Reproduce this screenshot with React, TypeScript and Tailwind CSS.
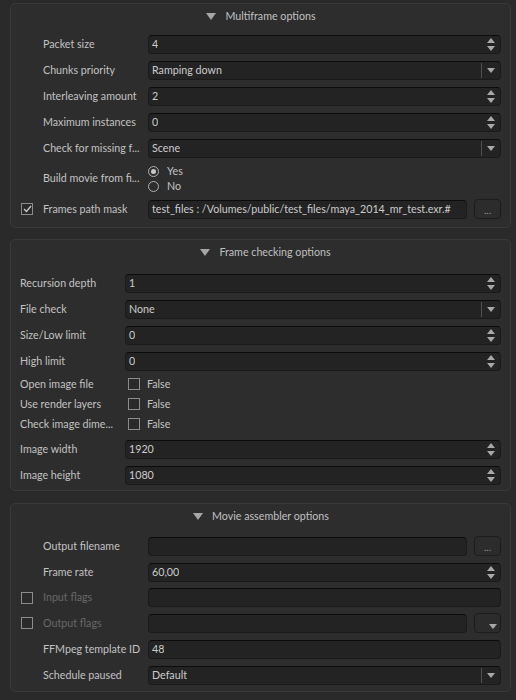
import React from "react";

const font = { fontFamily: "Lato, 'Open Sans', sans-serif" };

function Spin() {
  return (
    <div className="flex flex-col items-center gap-[3px] pr-[5px]">
      <svg width="8" height="5" viewBox="0 0 8 5">
        <path d="M0 5 L4 0 L8 5 Z" fill="#a8a8a8" />
      </svg>
      <svg width="8" height="5" viewBox="0 0 8 5">
        <path d="M0 0 L8 0 L4 5 Z" fill="#a8a8a8" />
      </svg>
    </div>
  );
}

function ComboArrow() {
  return (
    <div className="flex items-center h-full">
      <div className="w-px h-[15px] bg-[#505050]" />
      <div className="px-[5px]">
        <svg width="8" height="5" viewBox="0 0 8 5">
          <path d="M0 0 L8 0 L4 5 Z" fill="#a8a8a8" />
        </svg>
      </div>
    </div>
  );
}

type FieldKind = "spin" | "combo" | "text";

function Field({ value = "", kind = "text", className = "" }: { value?: string; kind?: FieldKind; className?: string }) {
  return (
    <div
      className={`h-[19px] flex items-center justify-between rounded-[4px] bg-[#232323] border border-[#1a1a1a] border-t-[#0c0c0c] text-[10.7px] text-[#cccccc] ${className}`}
    >
      <span className="pl-[3px] truncate">{value}</span>
      {kind === "spin" && <Spin />}
      {kind === "combo" && <ComboArrow />}
    </div>
  );
}

function DotsButton({ arrow = false }: { arrow?: boolean }) {
  return (
    <div className="w-[27px] h-[20px] shrink-0 rounded-[4px] bg-[#2c2c2c] border border-[#1c1c1c] flex items-end justify-center pb-[3px]">
      {arrow ? (
        <svg width="8" height="5" viewBox="0 0 8 5" className="ml-[10px]">
          <path d="M0 0 L8 0 L4 5 Z" fill="#a8a8a8" />
        </svg>
      ) : (
        <span className="text-[10px] leading-none text-[#9a9a9a]">...</span>
      )}
    </div>
  );
}

function Check({ checked = false }: { checked?: boolean }) {
  return (
    <div className="w-[12px] h-[12px] border-[1.5px] border-[#8c8c8c] bg-[#2a2a2a] flex items-center justify-center">
      {checked && (
        <svg width="9" height="8" viewBox="0 0 9 8">
          <path d="M1 4 L3.5 6.5 L8 1" stroke="#c8c8c8" strokeWidth="1.4" fill="none" />
        </svg>
      )}
    </div>
  );
}

function Radio({ on = false }: { on?: boolean }) {
  return (
    <div className="w-[11px] h-[11px] rounded-full border-[1.5px] border-[#b0b0b0] flex items-center justify-center">
      {on && <div className="w-[5px] h-[5px] rounded-full bg-[#c8c8c8]" />}
    </div>
  );
}

function Header({ title, h }: { title: string; h: string }) {
  return (
    <div className={`flex items-center justify-center gap-[9px] pl-[10px] ${h}`}>
      <svg width="10" height="7" viewBox="0 0 10 7">
        <path d="M0 0 L10 0 L5 7 Z" fill="#a6a6a6" />
      </svg>
      <span className="text-[10.7px] text-[#c0c0c0]">{title}</span>
    </div>
  );
}

function Row({
  label,
  labelW,
  lead,
  disabled,
  children,
  h = "h-[26px]",
}: {
  label: string;
  labelW: string;
  lead?: React.ReactNode;
  disabled?: boolean;
  children: React.ReactNode;
  h?: string;
}) {
  return (
    <div className={`flex items-center ${h}`}>
      {lead !== undefined && <div className="w-[32px] flex justify-center shrink-0">{lead}</div>}
      <div
        className={`${labelW} shrink-0 text-[10.7px] whitespace-nowrap ${disabled ? "text-[#686868]" : "text-[#c2c2c2]"}`}
      >
        {label}
      </div>
      <div className="flex-1 flex items-center gap-[7px]">{children}</div>
    </div>
  );
}

function Panel({ className = "", children }: { className?: string; children: React.ReactNode }) {
  return (
    <div className={`ml-[10px] mr-[5px] rounded-[5px] border border-[#393939] bg-[#2d2d2d] ${className}`}>
      {children}
    </div>
  );
}

export default function App() {
  return (
    <div className="w-[516px] h-[700px] bg-[#2a2a2a] pt-[3px] overflow-hidden" style={font}>
      {/* Multiframe */}
      <Panel className="pr-[9px] pb-[5px]">
        <Header title="Multiframe options" h="h-[24px]" />
        <div className="pt-[3px]">
          <Row label="Packet size" labelW="w-[105px]" lead={<span />}>
            <Field value="4" kind="spin" className="flex-1" />
          </Row>
          <Row label="Chunks priority" labelW="w-[105px]" lead={<span />}>
            <Field value="Ramping down" kind="combo" className="flex-1" />
          </Row>
          <Row label="Interleaving amount" labelW="w-[105px]" lead={<span />}>
            <Field value="2" kind="spin" className="flex-1" />
          </Row>
          <Row label="Maximum instances" labelW="w-[105px]" lead={<span />}>
            <Field value="0" kind="spin" className="flex-1" />
          </Row>
          <Row label="Check for missing f..." labelW="w-[105px]" lead={<span />}>
            <Field value="Scene" kind="combo" className="flex-1" />
          </Row>
          <Row label="Build movie from fi..." labelW="w-[105px]" lead={<span />} h="h-[35px]">
            <div className="flex flex-col gap-[3px] text-[10.7px] text-[#c2c2c2]">
              <div className="flex items-center gap-[8px] h-[12px]">
                <Radio on />
                <span>Yes</span>
              </div>
              <div className="flex items-center gap-[8px] h-[12px]">
                <Radio />
                <span>No</span>
              </div>
            </div>
          </Row>
          <Row label="Frames path mask" labelW="w-[105px]" lead={<Check checked />}>
            <Field value="test_files : /Volumes/public/test_files/maya_2014_mr_test.exr.#" className="flex-1" />
            <DotsButton />
          </Row>
        </div>
      </Panel>

      {/* Frame checking */}
      <Panel className="mt-[11px] pr-[9px] pl-[9px] pb-[2px]">
        <Header title="Frame checking options" h="h-[24px]" />
        <div className="pt-[6px]">
          <Row label="Recursion depth" labelW="w-[105px]">
            <Field value="1" kind="spin" className="flex-1" />
          </Row>
          <Row label="File check" labelW="w-[105px]">
            <Field value="None" kind="combo" className="flex-1" />
          </Row>
          <Row label="Size/Low limit" labelW="w-[105px]">
            <Field value="0" kind="spin" className="flex-1" />
          </Row>
          <Row label="High limit" labelW="w-[105px]">
            <Field value="0" kind="spin" className="flex-1" />
          </Row>
          {["Open image file", "Use render layers", "Check image dime..."].map((l) => (
            <Row key={l} label={l} labelW="w-[108px]" h="h-[20px]">
              <div className="flex items-center gap-[7px] text-[10.7px] text-[#c2c2c2]">
                <Check />
                <span>False</span>
              </div>
            </Row>
          ))}
          <div className="h-[2px]" />
          <Row label="Image width" labelW="w-[105px]">
            <Field value="1920" kind="spin" className="flex-1" />
          </Row>
          <Row label="Image height" labelW="w-[105px]">
            <Field value="1080" kind="spin" className="flex-1" />
          </Row>
        </div>
      </Panel>

      {/* Movie assembler */}
      <Panel className="mt-[12px] pr-[9px] pb-[3px]">
        <Header title="Movie assembler options" h="h-[25px]" />
        <div className="pt-[4px]">
          <Row label="Output filename" labelW="w-[105px]" lead={<span />}>
            <Field className="flex-1" />
            <DotsButton />
          </Row>
          <Row label="Frame rate" labelW="w-[105px]" lead={<span />}>
            <Field value="60,00" kind="spin" className="flex-1" />
          </Row>
          <Row label="Input flags" labelW="w-[105px]" lead={<Check />} disabled h="h-[25px]">
            <Field className="flex-1" />
          </Row>
          <Row label="Output flags" labelW="w-[105px]" lead={<Check />} disabled>
            <Field className="flex-1" />
            <DotsButton arrow />
          </Row>
          <Row label="FFMpeg template ID" labelW="w-[105px]" lead={<span />}>
            <Field value="48" className="flex-1" />
          </Row>
          <Row label="Schedule paused" labelW="w-[105px]" lead={<span />}>
            <Field value="Default" kind="combo" className="flex-1" />
          </Row>
        </div>
      </Panel>
    </div>
  );
}
